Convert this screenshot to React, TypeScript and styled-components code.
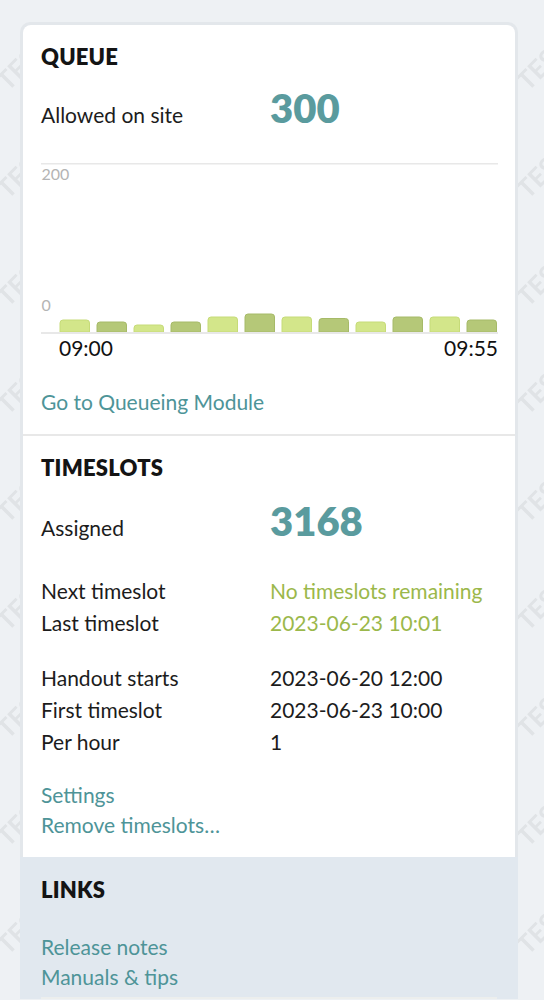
import React from "react";
import styled, { createGlobalStyle } from "styled-components";

const watermark =
  "data:image/svg+xml;utf8," +
  encodeURIComponent(
    `<svg xmlns='http://www.w3.org/2000/svg' width='260' height='108'><text x='0' y='0' transform='translate(22 92) rotate(-45)' font-family='Lato, sans-serif' font-weight='700' font-size='26' fill='#e0e3e6'>TEST</text></svg>`
  );

const GlobalStyle = createGlobalStyle`
  html, body {
    margin: 0;
    padding: 0;
  }
  body {
    background-color: #eef1f4;
    background-image: url("${watermark}");
    background-position: -14px 0;
    font-family: "Lato", "Open Sans", sans-serif;
    color: #1c1c1c;
    -webkit-font-smoothing: antialiased;
  }
`;

const Page = styled.div`
  padding: 22px 26px 0 20px;
`;

const Panel = styled.aside`
  background: #e3e7eb;
  border-radius: 10px 10px 0 0;
  padding: 3px 3px 0;
`;

const Card = styled.div`
  background: #ffffff;
  border-radius: 8px 8px 0 0;
`;

const Section = styled.section<{ $top: number; $bottom: number; $divider?: boolean }>`
  padding: ${(p) => p.$top}px 18px ${(p) => p.$bottom}px;
  border-top: ${(p) => (p.$divider ? "2px solid #e8e8e8" : "none")};
`;

const LinksSection = styled.section`
  margin: 0 -3px;
  background: #e1e8ef;
  padding: 19px 21px 0;
`;

const Title = styled.h2<{ $gap: number }>`
  margin: 0 0 ${(p) => p.$gap}px;
  font-size: 22px;
  line-height: 28px;
  font-weight: 800;
  letter-spacing: 0.2px;
  color: #141414;
`;

const StatRow = styled.div`
  display: grid;
  grid-template-columns: 229px 1fr;
  align-items: baseline;
`;

const Label = styled.span`
  font-size: 21px;
  line-height: 32px;
`;

const BigNumber = styled.span`
  font-size: 40px;
  line-height: 44px;
  font-weight: 800;
  color: #5a9b9e;
`;

const DataList = styled.div<{ $top: number }>`
  margin-top: ${(p) => p.$top}px;
  display: grid;
  grid-template-columns: 229px 1fr;
`;

const Value = styled.span<{ $tone?: "green" }>`
  font-size: 21px;
  line-height: 32px;
  color: ${(p) => (p.$tone === "green" ? "#9bb84b" : "#1c1c1c")};
`;

const LinkList = styled.div<{ $top: number }>`
  margin-top: ${(p) => p.$top}px;
  display: flex;
  flex-direction: column;
  align-items: flex-start;
`;

const TextLink = styled.a`
  font-size: 21px;
  line-height: 30px;
  color: #4e9498;
  text-decoration: none;
  cursor: pointer;
`;

const ChartWrap = styled.div`
  margin-top: 32px;
`;

const ChartSvg = styled.svg`
  display: block;
  width: 457px;
  height: 172px;
`;

const TimeAxis = styled.div`
  display: flex;
  justify-content: space-between;
  padding-left: 18px;
  width: 457px;
  box-sizing: border-box;
  font-size: 21px;
  line-height: 26px;
  color: #111;
`;

const BottomRule = styled.div`
  margin-top: 5px;
  height: 2px;
  background: #eceeed;
`;

const bars = [12, 10, 7, 10, 15, 18, 15, 13.5, 10, 15, 15, 12];

function QueueChart() {
  const base = 169;
  return (
    <ChartSvg viewBox="0 0 457 172">
      <line x1="0" x2="457" y1="0.75" y2="0.75" stroke="#e8e8e8" strokeWidth="1.5" />
      <text x="0.5" y="17" fontSize="16" fill="#b4b4b4" fontFamily="Lato, sans-serif">
        200
      </text>
      <text x="0.5" y="148" fontSize="16" fill="#b4b4b4" fontFamily="Lato, sans-serif">
        0
      </text>
      {bars.map((h, i) => {
        const x = 19 + i * 37;
        const w = 29.5;
        const r = 3;
        const top = base - h;
        const light = i % 2 === 0;
        const d = `M${x} ${base} V${top + r} Q${x} ${top} ${x + r} ${top} H${x + w - r} Q${x + w} ${top} ${x + w} ${top + r} V${base} Z`;
        return (
          <path
            key={i}
            d={d}
            fill={light ? "#d3e68a" : "#b5c878"}
            stroke={light ? "#c6db78" : "#a6ba68"}
            strokeWidth="1"
          />
        );
      })}
      <line x1="0" x2="457" y1="170" y2="170" stroke="#e8e8e8" strokeWidth="2" />
    </ChartSvg>
  );
}

export default function App() {
  return (
    <>
      <GlobalStyle />
      <Page>
        <Panel>
          <Card>
            <Section $top={18} $bottom={17}>
              <Title $gap={15}>QUEUE</Title>
              <StatRow>
                <Label>Allowed on site</Label>
                <BigNumber>300</BigNumber>
              </StatRow>
              <ChartWrap>
                <QueueChart />
                <TimeAxis>
                  <span>09:00</span>
                  <span>09:55</span>
                </TimeAxis>
              </ChartWrap>
              <LinkList $top={26}>
                <TextLink>Go to Queueing Module</TextLink>
              </LinkList>
            </Section>
            <Section $top={18} $bottom={17} $divider>
              <Title $gap={17}>TIMESLOTS</Title>
              <StatRow>
                <Label>Assigned</Label>
                <BigNumber>3168</BigNumber>
              </StatRow>
              <DataList $top={31}>
                <Label>Next timeslot</Label>
                <Value $tone="green">No timeslots remaining</Value>
                <Label>Last timeslot</Label>
                <Value $tone="green">2023-06-23 10:01</Value>
              </DataList>
              <DataList $top={23}>
                <Label>Handout starts</Label>
                <Value>2023-06-20 12:00</Value>
                <Label>First timeslot</Label>
                <Value>2023-06-23 10:00</Value>
                <Label>Per hour</Label>
                <Value>1</Value>
              </DataList>
              <LinkList $top={22}>
                <TextLink>Settings</TextLink>
                <TextLink>Remove timeslots…</TextLink>
              </LinkList>
            </Section>
          </Card>
          <LinksSection>
            <Title $gap={28}>LINKS</Title>
            <LinkList $top={0}>
              <TextLink>Release notes</TextLink>
              <TextLink>Manuals &amp; tips</TextLink>
            </LinkList>
            <BottomRule />
          </LinksSection>
        </Panel>
      </Page>
    </>
  );
}
